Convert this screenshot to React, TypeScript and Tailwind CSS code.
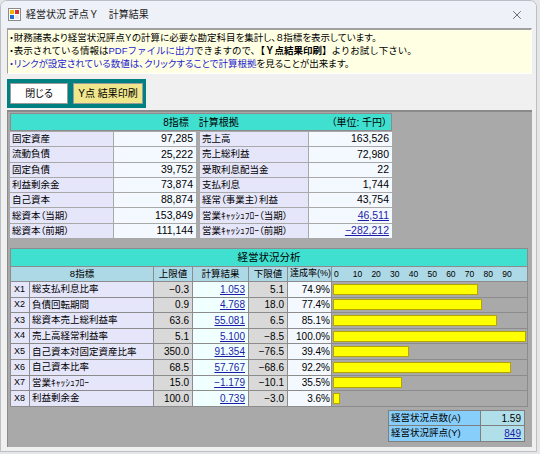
import { X } from "lucide-react";

const leftRows: [string, string][] = [
  ["固定資産", "97,285"],
  ["流動負債", "25,222"],
  ["固定負債", "39,752"],
  ["利益剰余金", "73,874"],
  ["自己資本", "88,874"],
  ["総資本（当期）", "153,849"],
  ["総資本（前期）", "111,144"],
];

const rightRows: [string, string, boolean][] = [
  ["売上高", "163,526", false],
  ["売上総利益", "72,980", false],
  ["受取利息配当金", "22", false],
  ["支払利息", "1,744", false],
  ["経常（事業主）利益", "43,754", false],
  ["営業ｷｬｯｼｭﾌﾛｰ（当期）", "46,511", true],
  ["営業ｷｬｯｼｭﾌﾛｰ（前期）", "−282,212", true],
];

type Row = { id: string; name: string; hi: string; result: string; lo: string; rate: number };

const analysis: Row[] = [
  { id: "X1", name: "総支払利息比率", hi: "−0.3", result: "1.053", lo: "5.1", rate: 74.9 },
  { id: "X2", name: "負債回転期間", hi: "0.9", result: "4.768", lo: "18.0", rate: 77.4 },
  { id: "X3", name: "総資本売上総利益率", hi: "63.6", result: "55.081", lo: "6.5", rate: 85.1 },
  { id: "X4", name: "売上高経常利益率", hi: "5.1", result: "5.100", lo: "−8.5", rate: 100.0 },
  { id: "X5", name: "自己資本対固定資産比率", hi: "350.0", result: "91.354", lo: "−76.5", rate: 39.4 },
  { id: "X6", name: "自己資本比率", hi: "68.5", result: "57.767", lo: "−68.6", rate: 92.2 },
  { id: "X7", name: "営業ｷｬｯｼｭﾌﾛｰ", hi: "15.0", result: "−1.179", lo: "−10.1", rate: 35.5 },
  { id: "X8", name: "利益剰余金", hi: "100.0", result: "0.739", lo: "−3.0", rate: 3.6 },
];

const BAR_MAX = 193;

function AppIcon() {
  return (
    <svg width="13" height="13" viewBox="0 0 13 13">
      <rect x="0.5" y="0.5" width="12" height="12" fill="#fff" stroke="#8a8a8a" />
      <rect x="2" y="2" width="4" height="4" fill="#f2b400" />
      <rect x="7" y="2" width="4" height="4" fill="#d9302c" />
      <rect x="2" y="7" width="4" height="4" fill="#1f6fd1" />
      <rect x="7" y="7" width="4" height="4" fill="#e8e8e8" />
    </svg>
  );
}

const link = "text-[#1c1ca8] underline underline-offset-1";

export default function App() {
  return (
    <div className="w-[540px] h-[454px] bg-[#e6e6e6] font-['Liberation_Sans','Noto_Sans_CJK_JP',sans-serif] text-black [font-feature-settings:'palt']">
      <div className="w-[537px] h-[452px] rounded-t-[7px] border border-[#b9bec7] bg-[#f0f0f0] flex flex-col overflow-hidden">
        {/* title bar */}
        <div className="h-[27px] shrink-0 bg-[#eef1f8] flex items-center pl-[7px] pr-[12px]">
          <AppIcon />
          <span className="ml-[5px] text-[10px] text-[#1a1a1a] [font-feature-settings:normal]">経営状況 評点Ｙ　計算結果</span>
          <X className="ml-auto text-[#333]" size={14} strokeWidth={1.2} />
        </div>

        <div className="pl-[6px] pr-[4px] flex flex-col">
          {/* info box */}
          <div className="h-[46px] bg-[#ffffe3] border-t-2 border-l border-t-[#a0a0a0] border-l-[#a0a0a0] border-b border-r border-b-white border-r-white pl-[1px] pt-[1px] text-[9.5px] leading-[13px]">
            <div>・財務諸表より経営状況評点Ｙの計算に必要な勘定科目を集計し、８指標を表示しています。</div>
            <div className="whitespace-nowrap">
              ・
              <span className="[font-feature-settings:normal]">
                表示されている情報は<span className="text-[#2424d0]">PDFファイルに出力</span>できますので、
                <span className="font-bold">【Ｙ点結果印刷】</span>よりお試し下さい。
              </span>
            </div>
            <div>
              <span className="text-[#2424d0]">・リンクが設定されている数値は、クリックすることで計算根拠</span>を見ることが出来ます。
            </div>
          </div>

          {/* buttons */}
          <div className="mt-[5px] w-[139px] h-[29px] bg-[#008080] flex items-center gap-[5px] px-[3px]">
            <button className="w-[58px] h-[21px] bg-white border border-[#9a9a9a] text-[10px]">閉じる</button>
            <button className="w-[70px] h-[21px] bg-[#f0e68c] border border-[#9a9a9a] text-[10px]">Y点 結果印刷</button>
          </div>

          {/* main panel */}
          <div className="mt-[2px] h-[337px] bg-[#a9a9a9] border-t-2 border-t-[#8a8a8a] border-l border-l-[#8a8a8a] pl-[2px] pt-[1px] flex flex-col">
            {/* 8 indicators */}
            <div className="w-[382px]">
              <div className="h-[18px] bg-[#40e0d0] border border-[#8c8c8c] grid grid-cols-[1fr_auto_1fr] items-center text-[10px]">
                <span />
                <span>8指標　計算根拠</span>
                <span className="justify-self-end pr-[4px]">（単位: 千円）</span>
              </div>
              <div className="mt-[1px] flex gap-[4px]">
                <div className="grid grid-cols-[103px_82px] gap-[1px]">
                  {leftRows.map(([label, value]) => (
                    <div key={label} className="contents">
                      <div className="h-[14.3px] bg-[#e6e6fa] flex items-center pl-[2px] text-[9.5px]">{label}</div>
                      <div className="h-[14.3px] bg-[#f4f9ff] flex items-center justify-end pr-[3px] text-[10.5px]">{value}</div>
                    </div>
                  ))}
                </div>
                <div className="grid grid-cols-[108px_83px] gap-[1px]">
                  {rightRows.map(([label, value, isLink]) => (
                    <div key={label} className="contents">
                      <div className="h-[14.3px] bg-[#e6e6fa] flex items-center pl-[2px] text-[9.5px] whitespace-nowrap overflow-hidden">{label}</div>
                      <div className="h-[14.3px] bg-[#f4f9ff] flex items-center justify-end pr-[3px] text-[10.5px]">
                        <span className={isLink ? link : ""}>{value}</span>
                      </div>
                    </div>
                  ))}
                </div>
              </div>
            </div>

            {/* analysis */}
            <div className="mt-[10px] w-[518px] bg-[#8c8c8c] p-px flex flex-col gap-px">
              <div className="h-[17px] bg-[#40e0d0] flex items-center justify-center text-[10.5px]">経営状況分析</div>
              <div className="grid grid-cols-[18px_123px_38px_55px_38px_43px_195px] gap-px">
                <div className="col-span-2 h-[14px] bg-[#add8e6] flex items-center justify-center text-[9.5px]">8指標</div>
                <div className="h-[14px] bg-[#add8e6] flex items-center justify-center text-[9.5px]">上限値</div>
                <div className="h-[14px] bg-[#add8e6] flex items-center justify-center text-[9.5px]">計算結果</div>
                <div className="h-[14px] bg-[#add8e6] flex items-center justify-center text-[9.5px]">下限値</div>
                <div className="h-[14px] bg-[#add8e6] flex items-center pl-[2px] text-[9px] whitespace-nowrap">達成率(%)</div>
                <div className="h-[14px] bg-[#add8e6] flex items-center pl-[2px] text-[8.5px]">
                  {[0, 10, 20, 30, 40, 50, 60, 70, 80, 90].map((n) => (
                    <span key={n} className="w-[18.7px] shrink-0">{n}</span>
                  ))}
                </div>

                {analysis.map((r) => (
                  <div key={r.id} className="contents">
                    <div className="h-[14.6px] bg-[#e6e6fa] flex items-center pl-[3px] text-[9px]">{r.id}</div>
                    <div className="h-[14.6px] bg-[#e6e6fa] flex items-center pl-[2px] text-[9.5px] whitespace-nowrap">{r.name}</div>
                    <div className="h-[14.6px] bg-[#d9d9d9] flex items-center justify-end pr-[3px] text-[10px]">{r.hi}</div>
                    <div className="h-[14.6px] bg-[#f0ffff] flex items-center justify-end pr-[3px] text-[10px]">
                      <span className={link}>{r.result}</span>
                    </div>
                    <div className="h-[14.6px] bg-[#d9d9d9] flex items-center justify-end pr-[3px] text-[10px]">{r.lo}</div>
                    <div className="h-[14.6px] bg-[#f4f9ff] flex items-center justify-end pr-[1px] text-[10px]">{r.rate.toFixed(1)}%</div>
                    <div className="h-[14.6px] bg-[#a9a9a9] flex items-center pl-[1px]">
                      <div
                        className="h-[11px] bg-[#ffff00] border border-[#b5a300]"
                        style={{ width: `${Math.round((r.rate / 100) * BAR_MAX)}px` }}
                      />
                    </div>
                  </div>
                ))}
              </div>
            </div>

            {/* summary */}
            <div className="w-[518px] flex justify-end pr-[3px] mt-[3px]">
              <div className="bg-[#7f7f7f] p-px grid grid-cols-[91px_43px] gap-px text-[9.5px]">
                <div className="h-[14.5px] bg-[#87cefa] flex items-center pl-[2px]">経営状況点数(A)</div>
                <div className="h-[14.5px] bg-[#b0dfea] flex items-center justify-end pr-[3px] text-[10px]">1.59</div>
                <div className="h-[14.5px] bg-[#87cefa] flex items-center pl-[2px]">経営状況評点(Y)</div>
                <div className="h-[14.5px] bg-[#b0dfea] flex items-center justify-end pr-[3px] text-[10px]">
                  <span className={link}>849</span>
                </div>
              </div>
            </div>
          </div>
        </div>
      </div>
    </div>
  );
}
